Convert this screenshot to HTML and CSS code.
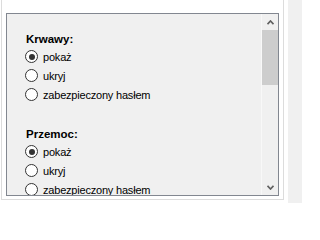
FILE: index.html
```html
<!DOCTYPE html>
<html lang="pl">
<head>
<meta charset="utf-8">
<link rel="stylesheet" href="styles.css">
</head>
<body>
<div class="page">
  <div class="frame">
    <div class="panel">
      <div class="content">
        <div class="group">
          <div class="heading">Krwawy:</div>
          <div class="option"><span class="radio checked"></span><span class="label">pokaż</span></div>
          <div class="option"><span class="radio"></span><span class="label">ukryj</span></div>
          <div class="option"><span class="radio"></span><span class="label">zabezpieczony hasłem</span></div>
        </div>
        <div class="group">
          <div class="heading">Przemoc:</div>
          <div class="option"><span class="radio checked"></span><span class="label">pokaż</span></div>
          <div class="option"><span class="radio"></span><span class="label">ukryj</span></div>
          <div class="option"><span class="radio"></span><span class="label">zabezpieczony hasłem</span></div>
        </div>
      </div>
      <div class="scrollbar">
        <div class="arrow">
          <svg width="7" height="5" viewBox="0 0 7 5"><path d="M0.5 4.2 L3.5 1 L6.5 4.2" fill="none" stroke="#606060" stroke-width="1.7"/></svg>
        </div>
        <div class="track"><div class="thumb"></div></div>
        <div class="arrow">
          <svg width="7" height="5" viewBox="0 0 7 5"><path d="M0.5 0.8 L3.5 4 L6.5 0.8" fill="none" stroke="#606060" stroke-width="1.7"/></svg>
        </div>
      </div>
    </div>
  </div>
  <div class="side"></div>
</div>
</body>
</html>
```
FILE: styles.css
```css
html, body {
  margin: 0;
  padding: 0;
  background: #ffffff;
}
body {
  font-family: "Liberation Sans", Arial, sans-serif;
  font-size: 11px;
  color: #000;
}
.page {
  display: flex;
  width: 302px;
  height: 203px;
  overflow: hidden;
}
.frame {
  margin-left: 1px;
  width: 283px;
  height: 200px;
  border: 1px solid #dcdcdc;
  border-top: none;
  padding: 13px 4px 3px 4px;
  box-sizing: border-box;
  flex: none;
}
.panel {
  display: flex;
  height: 100%;
  border: 1px solid #828790;
  background: #f0f0f0;
  box-sizing: border-box;
}
.content {
  flex: 1;
  padding: 17px 0 0 18px;
  overflow: hidden;
}
.group {
  margin-bottom: 22px;
}
.heading {
  font-weight: bold;
  font-size: 11.5px;
  height: 16px;
  line-height: 16px;
  padding-left: 1px;
}
.option {
  display: flex;
  align-items: center;
  height: 19px;
  white-space: nowrap;
}
.radio {
  width: 13px;
  height: 13px;
  box-sizing: border-box;
  border: 1px solid #333333;
  border-radius: 50%;
  background: #ffffff;
  display: flex;
  align-items: center;
  justify-content: center;
  flex: none;
}
.radio.checked::after {
  content: "";
  width: 6px;
  height: 6px;
  border-radius: 50%;
  background: #333333;
}
.label {
  margin-left: 5px;
  font-size: 11px;
  letter-spacing: -0.2px;
}
.scrollbar {
  width: 17px;
  flex: none;
  display: flex;
  flex-direction: column;
  background: #f0f0f0;
  border-left: 1px solid #f8f8f8;
  box-sizing: border-box;
}
.arrow {
  height: 16px;
  display: flex;
  align-items: center;
  justify-content: center;
}
.track {
  flex: 1;
}
.thumb {
  height: 55px;
  background: #cdcdcd;
}
.side {
  margin-left: 4px;
  flex: 1;
  background: #f0f0f0;
}
```
